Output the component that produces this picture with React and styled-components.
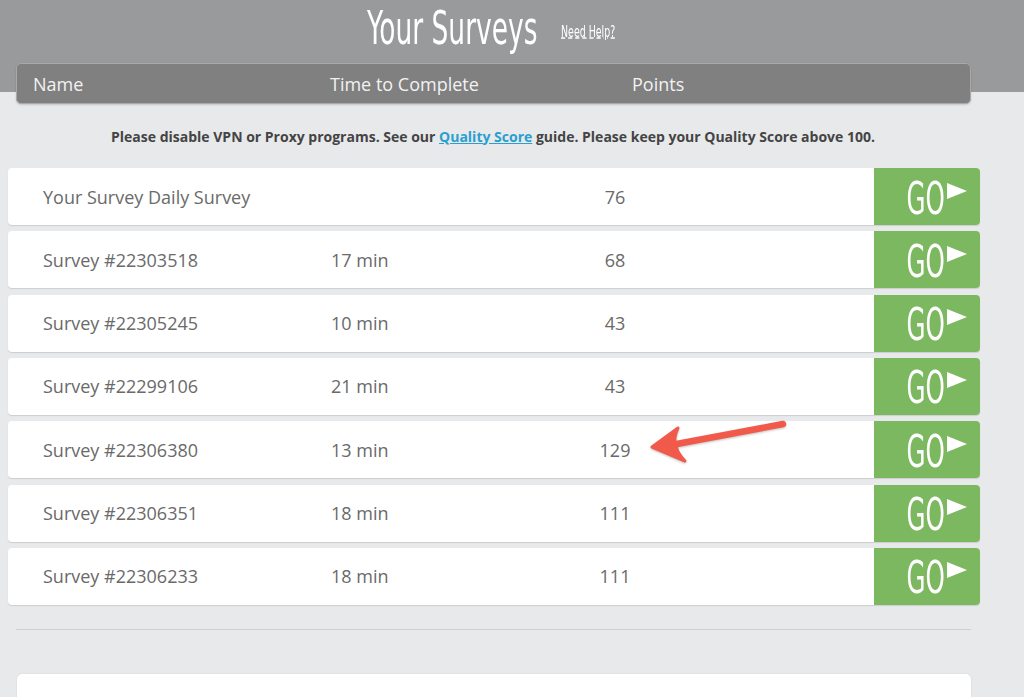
import styled, { createGlobalStyle } from "styled-components"

const GlobalStyle = createGlobalStyle`
  html, body { margin: 0; padding: 0; }
  body {
    background: #e8e9eb;
    font-family: "Open Sans", "Liberation Sans", sans-serif;
  }
`

const surveys = [
  { name: "Your Survey Daily Survey", time: "", points: 76 },
  { name: "Survey #22303518", time: "17 min", points: 68 },
  { name: "Survey #22305245", time: "10 min", points: 43 },
  { name: "Survey #22299106", time: "21 min", points: 43 },
  { name: "Survey #22306380", time: "13 min", points: 129 },
  { name: "Survey #22306351", time: "18 min", points: 111 },
  { name: "Survey #22306233", time: "18 min", points: 111 },
]

const App = () => {
  return (
    <>
      <GlobalStyle />
      <Page>
        <TitleRow>
          <TitleBox>
            <Title>Your Surveys</Title>
          </TitleBox>
          <HelpBox>
            <Help href="#">Need Help?</Help>
          </HelpBox>
        </TitleRow>
        <HeaderBar>
          <HeadCell $w="297px">Name</HeadCell>
          <HeadCell $w="302px">Time to Complete</HeadCell>
          <HeadCell>Points</HeadCell>
        </HeaderBar>
        <Notice>
          Please disable VPN or Proxy programs. See our <a href="#">Quality Score</a> guide. Please keep your Quality Score above 100.
        </Notice>
        <List>
          {surveys.map((s) => (
            <Row key={s.name}>
              <Name>{s.name}</Name>
              <Time>{s.time}</Time>
              <Points>{s.points}</Points>
              <span />
              <GoButton>
                <GoText>GO</GoText>
                <Play viewBox="0 0 20 16">
                  <path d="M0 0 L20 8 L0 16 Z" fill="#fff" />
                </Play>
              </GoButton>
            </Row>
          ))}
          <Arrow viewBox="0 0 150 50" width="150" height="50">
            <path d="M137 6 L20 28" fill="none" stroke="#f15a4a" strokeWidth="6.5" strokeLinecap="round" />
            <path d="M6 29 L32 10 Q27 21 30 27 Q31 35 39 43 Z" fill="#f15a4a" stroke="#f15a4a" strokeWidth="3" strokeLinejoin="round" />
          </Arrow>
        </List>
        <Separator />
        <BottomCard />
      </Page>
    </>
  )
}

export default App

const Page = styled.div`
  position: relative;
  background: linear-gradient(#999a9b 0 92px, #e8e9eb 92px);
  height: 697px;
  overflow: hidden;
`

const TitleRow = styled.div`
  height: 63px;
  display: flex;
  justify-content: center;
  align-items: flex-start;
  padding-right: 36px;
  gap: 24px;
  box-sizing: border-box;
`

const TitleBox = styled.div`
  width: 170px;
  white-space: nowrap;
`

const Title = styled.h1`
  margin: 0;
  font-family: "DejaVu Sans Condensed", "Liberation Sans", sans-serif;
  font-weight: normal;
  font-size: 46px;
  line-height: 56px;
  color: #fff;
  display: inline-block;
  transform: scaleX(0.64);
  transform-origin: left center;
`

const HelpBox = styled.div`
  width: 60px;
  white-space: nowrap;
  padding-top: 20px;
`

const Help = styled.a`
  font-family: "DejaVu Sans Condensed", "Liberation Sans", sans-serif;
  font-size: 15px;
  color: #fff;
  text-decoration: underline dashed;
  display: inline-block;
  transform: scaleX(0.7);
  transform-origin: left center;
`

const HeaderBar = styled.div`
  margin: 0 53px 0 16px;
  height: 41px;
  box-sizing: border-box;
  background: #808080;
  border: 1px solid #a9a9a9;
  border-radius: 5px;
  display: flex;
  align-items: center;
  padding-left: 16px;
  box-shadow: 0 1px 2px rgba(0, 0, 0, 0.15);
`

const HeadCell = styled.div`
  width: ${(p) => p.$w || "auto"};
  color: #f2f2f2;
  font-size: 18px;
`

const Notice = styled.p`
  margin: 0;
  height: 64px;
  display: flex;
  align-items: center;
  justify-content: center;
  padding-right: 38px;
  font-size: 14px;
  font-weight: bold;
  color: #444;
  white-space: pre;

  a {
    color: #2b9fcf;
    text-decoration: underline;
  }
`

const List = styled.div`
  position: relative;
  margin: 0 44px 0 8px;
  display: flex;
  flex-direction: column;
  gap: 6.33px;
`

const Row = styled.div`
  display: grid;
  grid-template-columns: 288px 200px 168px 1fr 106px;
  align-items: center;
  height: 57px;
  padding-left: 35px;
  background: #fff;
  border-radius: 4px;
  overflow: hidden;
  box-shadow: 0 1px 1px rgba(0, 0, 0, 0.12);
  color: #6a6a6a;
  font-size: 18px;
`

const Name = styled.div`
  white-space: nowrap;
`

const Time = styled.div``

const Points = styled.div`
  text-align: center;
`

const GoButton = styled.div`
  height: 100%;
  background: #7cb85f;
  display: flex;
  align-items: center;
  justify-content: flex-end;
  padding-right: 13px;
  gap: 2px;
`

const GoText = styled.span`
  font-family: "DejaVu Sans Condensed", "Liberation Sans", sans-serif;
  font-size: 44px;
  line-height: 44px;
  color: #fff;
  display: inline-block;
  transform: scaleX(0.62);
  transform-origin: right center;
  margin-left: -20px;
  margin-top: 4px;
`

const Play = styled.svg`
  width: 20px;
  height: 16px;
  margin-bottom: 12px;
`

const Arrow = styled.svg`
  position: absolute;
  left: 638px;
  top: 250px;
  filter: drop-shadow(0 1px 1px rgba(0, 0, 0, 0.25));
`

const Separator = styled.hr`
  margin: 24px 53px 0 16px;
  border: none;
  border-top: 1px solid #cfd0d2;
`

const BottomCard = styled.div`
  margin: 44px 53px 0 17px;
  height: 60px;
  background: #fff;
  border-radius: 5px;
  box-shadow: 0 0 2px rgba(0, 0, 0, 0.1);
`
